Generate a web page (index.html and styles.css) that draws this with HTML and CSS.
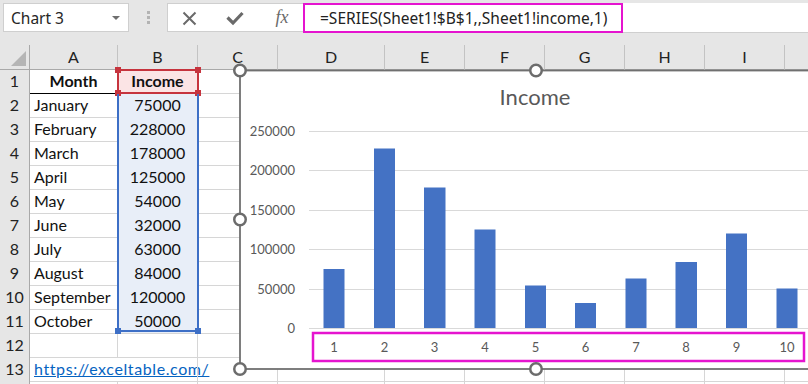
FILE: index.html
```html
<!DOCTYPE html>
<html lang="en">
<head>
  <meta charset="UTF-8" />
  <title>Chart 3 - Income</title>
  <link rel="stylesheet" href="styles.css">
</head>
<body>

  <div class="toolbar">
    <div class="namebox">
      <span>Chart 3</span>
      <span class="drop"></span>
    </div>
    <div class="dots"><i></i><i></i><i></i></div>
    <div class="fbtns">
      <svg width="136" height="29" viewBox="168 3 136 29">
        <path d="M184.5 12.5 L196.5 24.5 M196.5 12.5 L184.5 24.5" stroke="#6a6a6a" stroke-width="2" fill="none"/>
        <path d="M228.5 17.5 L234 23 L243.5 13" stroke="#6a6a6a" stroke-width="3.2" fill="none"/>
        <text x="283" y="23" text-anchor="middle" class="fx">fx</text>
      </svg>
    </div>
    <div class="formula">
      <div class="formula-text">=SERIES(Sheet1!$B$1,,Sheet1!income,1)</div>
    </div>
  </div>

  <div class="sheet">
    <div class="row head">
      <div class="corner"></div><div>A</div><div>B</div><div>C</div><div>D</div><div>E</div><div>F</div><div>G</div><div>H</div><div>I</div><div></div>
    </div>
    <div class="row">
      <div class="rh">1</div><div class="c b month">Month</div><div class="c b ctr pink">Income</div><div></div><div></div><div></div><div></div><div></div><div></div><div></div><div></div>
    </div>
    <div class="row">
      <div class="rh">2</div><div class="c">January</div><div class="c ctr blue">75000</div><div></div><div></div><div></div><div></div><div></div><div></div><div></div><div></div>
    </div>
    <div class="row">
      <div class="rh">3</div><div class="c">February</div><div class="c ctr blue">228000</div><div></div><div></div><div></div><div></div><div></div><div></div><div></div><div></div>
    </div>
    <div class="row">
      <div class="rh">4</div><div class="c">March</div><div class="c ctr blue">178000</div><div></div><div></div><div></div><div></div><div></div><div></div><div></div><div></div>
    </div>
    <div class="row">
      <div class="rh">5</div><div class="c">April</div><div class="c ctr blue">125000</div><div></div><div></div><div></div><div></div><div></div><div></div><div></div><div></div>
    </div>
    <div class="row">
      <div class="rh">6</div><div class="c">May</div><div class="c ctr blue">54000</div><div></div><div></div><div></div><div></div><div></div><div></div><div></div><div></div>
    </div>
    <div class="row">
      <div class="rh">7</div><div class="c">June</div><div class="c ctr blue">32000</div><div></div><div></div><div></div><div></div><div></div><div></div><div></div><div></div>
    </div>
    <div class="row">
      <div class="rh">8</div><div class="c">July</div><div class="c ctr blue">63000</div><div></div><div></div><div></div><div></div><div></div><div></div><div></div><div></div>
    </div>
    <div class="row">
      <div class="rh">9</div><div class="c">August</div><div class="c ctr blue">84000</div><div></div><div></div><div></div><div></div><div></div><div></div><div></div><div></div>
    </div>
    <div class="row">
      <div class="rh">10</div><div class="c">September</div><div class="c ctr blue">120000</div><div></div><div></div><div></div><div></div><div></div><div></div><div></div><div></div>
    </div>
    <div class="row">
      <div class="rh">11</div><div class="c">October</div><div class="c ctr blue">50000</div><div></div><div></div><div></div><div></div><div></div><div></div><div></div><div></div>
    </div>
    <div class="row">
      <div class="rh">12</div><div></div><div></div><div></div><div></div><div></div><div></div><div></div><div></div><div></div><div></div>
    </div>
    <div class="row">
      <div class="rh">13</div><div class="c over"><a href="#">https://exceltable.com/</a></div><div></div><div></div><div></div><div></div><div></div><div></div><div></div><div></div><div></div>
    </div>
    <div class="row">
      <div class="rh"></div><div></div><div></div><div></div><div></div><div></div><div></div><div></div><div></div><div></div><div></div>
    </div>

    <!-- selected ranges -->
    <div class="sel sel-red">
      <span class="h tl"></span><span class="h tr"></span><span class="h bl"></span><span class="h br"></span>
    </div>
    <div class="sel sel-blue">
      <span class="h bl"></span><span class="h br"></span>
    </div>

    <!-- chart object -->
    <svg class="chart" width="600" height="320" viewBox="232 62 600 320">
      <rect x="240" y="70.5" width="592" height="298.5" fill="#fff" stroke="#707070" stroke-width="1.8"/>
      <text x="535" y="105" text-anchor="middle" class="title">Income</text>

      <g stroke="#d9d9d9" stroke-width="1">
        <line x1="309" x2="832" y1="131.5" y2="131.5"/>
        <line x1="309" x2="832" y1="170.5" y2="170.5"/>
        <line x1="309" x2="832" y1="210.5" y2="210.5"/>
        <line x1="309" x2="832" y1="249.5" y2="249.5"/>
        <line x1="309" x2="832" y1="289.5" y2="289.5"/>
        <line x1="309" x2="832" y1="328.5" y2="328.5"/>
      </g>
      <g class="ylab" text-anchor="end">
        <text x="295" y="136">250000</text>
        <text x="295" y="175">200000</text>
        <text x="295" y="215">150000</text>
        <text x="295" y="254">100000</text>
        <text x="295" y="294">50000</text>
        <text x="295" y="333">0</text>
      </g>

      <g fill="#4472c4">
        <rect x="323.5" y="269" width="21" height="59"/>
        <rect x="374" y="148.5" width="21" height="179.5"/>
        <rect x="424" y="187.5" width="21.5" height="140.5"/>
        <rect x="474.5" y="229.5" width="21" height="98.5"/>
        <rect x="525" y="285.5" width="21" height="42.5"/>
        <rect x="575" y="303" width="21" height="25"/>
        <rect x="625.5" y="278.5" width="21" height="49.5"/>
        <rect x="675.5" y="262" width="21.5" height="66"/>
        <rect x="726" y="233.5" width="21" height="94.5"/>
        <rect x="776.5" y="288.5" width="21" height="39.5"/>
      </g>

      <g class="xlab" text-anchor="middle">
        <text x="334" y="352">1</text>
        <text x="384.5" y="352">2</text>
        <text x="434.5" y="352">3</text>
        <text x="485" y="352">4</text>
        <text x="535.5" y="352">5</text>
        <text x="585.5" y="352">6</text>
        <text x="636" y="352">7</text>
        <text x="686" y="352">8</text>
        <text x="736.5" y="352">9</text>
        <text x="787" y="352">10</text>
      </g>
      <rect x="313" y="333" width="491" height="28" fill="none" stroke="#e514cf" stroke-width="2.5"/>

      <g fill="#fff" stroke="#6c6c6c" stroke-width="2.5">
        <circle cx="240" cy="70.5" r="5.75"/>
        <circle cx="536" cy="70.5" r="5.75"/>
        <circle cx="240" cy="219.5" r="5.75"/>
        <circle cx="240" cy="369" r="5.75"/>
        <circle cx="536" cy="369" r="5.75"/>
      </g>
    </svg>
  </div>

</body>
</html>
```

FILE: styles.css
```css
html, body {
  margin: 0;
  padding: 0;
}
body {
  width: 808px;
  height: 384px;
  overflow: hidden;
  background: #fff;
  font-family: "Lato", "Noto Sans", sans-serif;
  color: #111;
}

/* formula bar */
.toolbar {
  display: flex;
  align-items: flex-start;
  height: 45px;
  padding: 3px 0 0 3px;
  box-sizing: border-box;
  background: #e6e6e6;
  font-family: "Noto Sans", "Open Sans", sans-serif;
}
.namebox {
  display: flex;
  align-items: center;
  justify-content: space-between;
  width: 126px;
  height: 29px;
  box-sizing: border-box;
  padding: 0 8px 0 7px;
  background: #fff;
  border: 1px solid #cfcfcf;
  font-size: 15.5px;
  color: #262626;
}
.drop {
  width: 0;
  height: 0;
  border-left: 4px solid transparent;
  border-right: 4px solid transparent;
  border-top: 4px solid #6f6f6f;
}
.dots {
  display: flex;
  flex-direction: column;
  gap: 2px;
  margin: 8px 17px 0 18px;
}
.dots i {
  width: 3px;
  height: 3px;
  background: #b3b3b3;
}
.fbtns {
  width: 136px;
  height: 29px;
  box-sizing: border-box;
  background: #fff;
  border: 1px solid #cfcfcf;
  border-right: none;
}
.fbtns svg {
  display: block;
  margin: -1px 0 0 -1px;
}
.fx {
  font-family: "Liberation Serif", serif;
  font-style: italic;
  font-size: 18px;
  fill: #6a6a6a;
}
.formula {
  flex: 1;
  height: 30px;
  background: #fff;
  border-bottom: 1px solid #cfcfcf;
  box-sizing: border-box;
}
.formula-text {
  width: 320px;
  height: 30px;
  box-sizing: border-box;
  border: 2px solid #e514cf;
  padding-left: 15px;
  line-height: 26px;
  font-size: 15.5px;
  color: #222;
  white-space: nowrap;
}

/* sheet grid */
.sheet {
  position: relative;
}
.row {
  display: grid;
  grid-template-columns: 30px 88px 80px 80px 107px 80px 80px 80px 80px 80px 80px;
  height: 24px;
}
.row > div {
  box-sizing: border-box;
  border-right: 1px solid #d6d6d6;
  border-bottom: 1px solid #d6d6d6;
  font-size: 16px;
  line-height: 24px;
  white-space: nowrap;
}
.row.head > div {
  background: #e6e6e6;
  border-right: 1px solid #c3c3c3;
  border-bottom: 1px solid #a9a9a9;
  text-align: center;
  color: #222;
}
.row .rh {
  background: #e6e6e6;
  border-right: 1px solid #a9a9a9;
  border-bottom: 1px solid #cdcdcd;
  text-align: center;
  color: #222;
}
.row.head .corner {
  position: relative;
  border-right: 1px solid #a9a9a9;
}
.corner::after {
  content: "";
  position: absolute;
  right: 3px;
  bottom: 3px;
  border-left: 15px solid transparent;
  border-bottom: 15px solid #b5b5b5;
}
.c {
  padding: 0 4px;
}
.b {
  font-weight: bold;
}
.ctr {
  text-align: center;
}
.month {
  text-align: center;
  border-bottom: 1px solid #000 !important;
}
.pink {
  background: #fbe4e5;
}
.blue {
  background: #e8eef8;
}
.over {
  overflow: visible;
  border-right: none !important;
}
.over a {
  color: #0563c1;
  text-decoration: underline;
  letter-spacing: 0.6px;
}

/* selection outlines */
.sel {
  position: absolute;
  left: 117px;
  width: 82px;
  box-sizing: border-box;
}
.sel-red {
  top: 24px;
  height: 25px;
  border: 2px solid #c6343e;
}
.sel-blue {
  top: 49px;
  height: 238px;
  border: 2px solid #3d6fc6;
  border-top: none;
}
.h {
  position: absolute;
  width: 6px;
  height: 6px;
}
.sel-red .h { background: #c6343e; }
.sel-blue .h { background: #3d6fc6; }
.tl { left: -4px; top: -4px; }
.tr { right: -4px; top: -4px; }
.bl { left: -4px; bottom: -4px; }
.br { right: -4px; bottom: -4px; }

/* chart object */
.chart {
  position: absolute;
  left: 232px;
  top: 17px;
  font-family: "Lato", "Noto Sans", sans-serif;
}
.title {
  font-size: 22px;
  fill: #595959;
}
.ylab text, .xlab text {
  font-size: 13px;
  fill: #595959;
}
```
